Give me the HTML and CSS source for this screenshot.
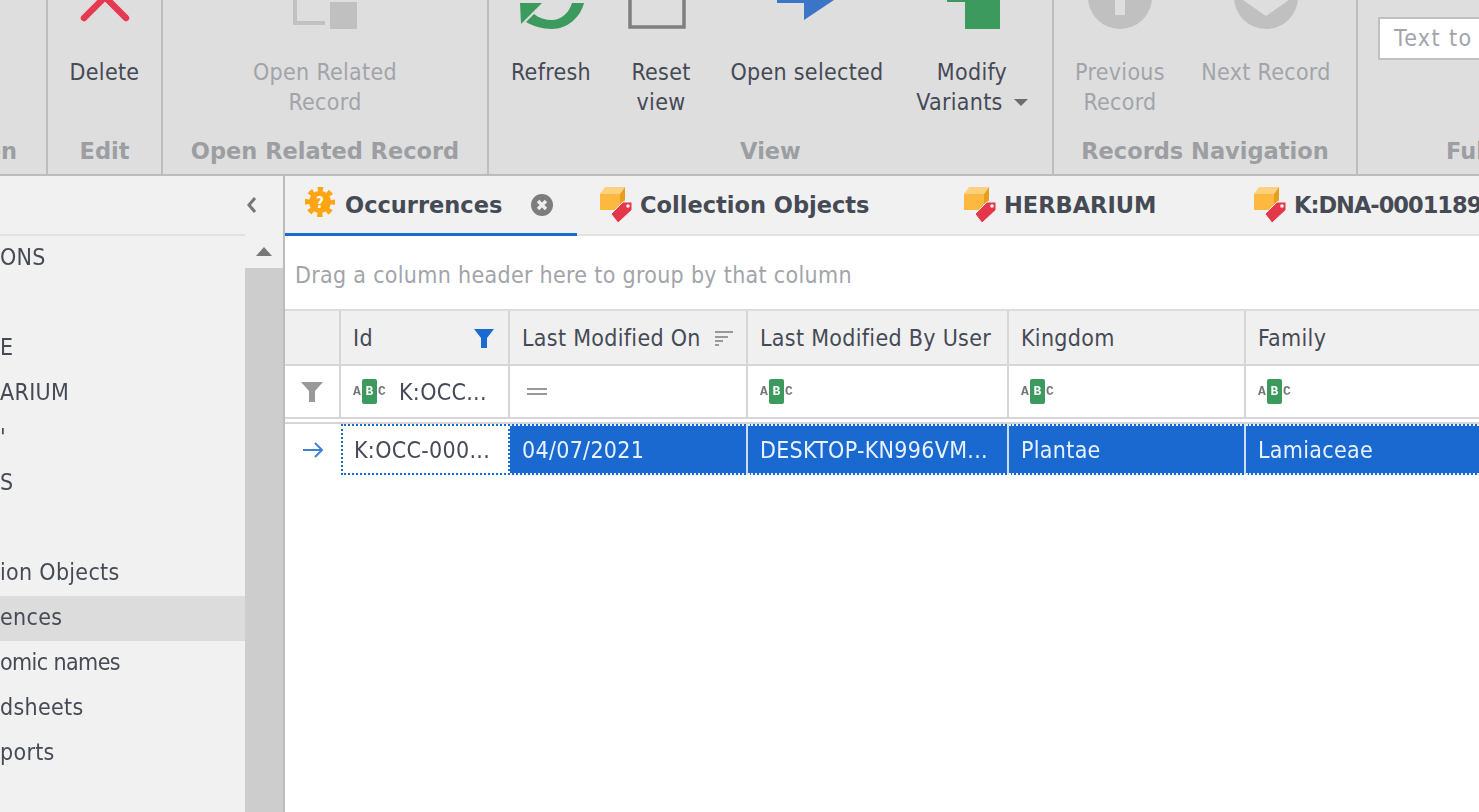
FILE: index.html
```html
<!DOCTYPE html>
<html lang="en">
<head>
<meta charset="utf-8">
<title>Occurrences</title>
<link rel="stylesheet" href="styles.css">
</head>
<body>
<div class="app">
  <header class="ribbon">
    <section class="group g-action"><div class="items"></div><div class="group-label right">on</div></section>
    <section class="group g-edit">
      <div class="items">
        <div class="btn w-full">
          <svg class="ico" width="64" height="29" viewBox="0 0 64 29"><path class="s-red" d="M32-3 11 18M32-3 53 18"/></svg>
          <div class="lbl">Delete</div>
        </div>
      </div>
      <div class="group-label">Edit</div>
    </section>
    <section class="group g-rel">
      <div class="items">
        <div class="btn w-full dis">
          <svg class="ico" width="72" height="29" viewBox="0 0 72 29"><path class="s-gray" d="M6-4V23H36"/><rect class="f-gray" x="41" y="2" width="27" height="27"/></svg>
          <div class="lbl">Open Related<br>Record</div>
        </div>
      </div>
      <div class="group-label">Open Related Record</div>
    </section>
    <section class="group g-view">
      <div class="items">
        <div class="btn w-refresh">
          <svg class="ico" width="68" height="29" viewBox="0 0 68 29"><path class="f-green" d="M67 3C63 18 50 29 35 29C25 29 16 26 9 22L17 14C22 18 28 20 35 20C44 20 52 13 55 3ZM3 3H25L4 24Z"/></svg>
          <div class="lbl">Refresh</div>
        </div>
        <div class="btn w-reset">
          <svg class="ico ico-reset" width="60" height="29" viewBox="0 0 60 29"><path class="s-dark" d="M2-4V27H56V-4"/></svg>
          <div class="lbl">Reset<br>view</div>
        </div>
        <div class="btn w-open">
          <svg class="ico" width="60" height="29" viewBox="0 0 60 29"><path class="f-blue" d="M0 0V3H27V20L57 0Z"/></svg>
          <div class="lbl">Open selected</div>
        </div>
        <div class="btn w-modify">
          <svg class="ico" width="56" height="29" viewBox="0 0 56 29"><path class="f-green" d="M3 0H21V2H3ZM21 0H56V29H21Z"/></svg>
          <div class="lbl">Modify<br>Variants<span class="caret"></span></div>
        </div>
      </div>
      <div class="group-label">View</div>
    </section>
    <section class="group g-nav">
      <div class="items">
        <div class="btn w-prev dis">
          <svg class="ico" width="66" height="29" viewBox="0 0 66 29"><circle class="f-gray" cx="33" cy="-3" r="32"/><rect class="f-ribbon" x="28" y="-3" width="10" height="18"/></svg>
          <div class="lbl">Previous<br>Record</div>
        </div>
        <div class="btn w-next dis">
          <svg class="ico" width="66" height="29" viewBox="0 0 66 29"><circle class="f-gray" cx="33" cy="-3" r="32"/><path class="f-ribbon" d="M10 0H56L33 16Z"/></svg>
          <div class="lbl">Next Record</div>
        </div>
      </div>
      <div class="group-label">Records Navigation</div>
    </section>
    <section class="group g-full">
      <div class="search">Text to search</div>
      <div class="group-label left">Full</div>
    </section>
  </header>

  <main class="body">
    <aside class="side">
      <div class="side-head"><svg width="12" height="18" viewBox="0 0 12 18"><path class="s-chev" d="M9 2 3 9 9 16"/></svg></div>
      <div class="side-main">
        <ul class="nav">
          <li>ONS</li>
          <li></li>
          <li>E</li>
          <li>ARIUM</li>
          <li>'</li>
          <li>S</li>
          <li></li>
          <li>ion Objects</li>
          <li class="on">ences</li>
          <li class="tight">omic names</li>
          <li>dsheets</li>
          <li>ports</li>
          <li></li>
        </ul>
        <div class="scroll">
          <div class="scroll-up"><span class="up"></span></div>
          <div class="scroll-track"></div>
        </div>
      </div>
    </aside>

    <section class="content">
      <nav class="tabs">
        <div class="tab active t-occ">
          <svg width="30" height="36" viewBox="0 0 30 36"><circle class="gear-body" cx="15" cy="15" r="11"/><circle class="gear-teeth" cx="15" cy="15" r="12.6"/><text class="q" x="15" y="20.5">?</text></svg>
          <span class="tab-t">Occurrences</span>
          <svg class="close" width="24" height="24" viewBox="0 0 24 24"><circle class="f-close" cx="12" cy="12" r="11"/><path class="s-x" d="M8 8 16 16M16 8 8 16"/></svg>
        </div>
        <div class="tab t-col"><svg width="34" height="38" viewBox="0 0 34 38"><use href="#cube"/></svg><span class="tab-t">Collection Objects</span></div>
        <div class="tab t-herb"><svg width="34" height="38" viewBox="0 0 34 38"><use href="#cube"/></svg><span class="tab-t">HERBARIUM</span></div>
        <div class="tab t-dna"><svg width="34" height="38" viewBox="0 0 34 38"><use href="#cube"/></svg><span class="tab-t">K:DNA-00011890</span></div>
      </nav>
      <div class="groupby">Drag a column header here to group by that column</div>
      <div class="grid g-head">
        <div class="cell"></div>
        <div class="cell h-id h-fn"><span>Id</span><svg width="20" height="20" viewBox="0 0 20 20"><path class="f-fblue" d="M0 1H20L13 10V20H7V10Z"/></svg></div>
        <div class="cell h-id"><span>Last Modified On</span><svg width="20" height="16" viewBox="0 0 20 16"><path class="s-sort" d="M1 2H19M1 7H14M1 11H9M1 15H5"/></svg></div>
        <div class="cell">Last Modified By User</div>
        <div class="cell">Kingdom</div>
        <div class="cell">Family</div>
      </div>
      <div class="grid g-filter">
        <div class="cell ind"><svg width="22" height="22" viewBox="0 0 22 22"><path class="f-fgray" d="M0 1H22L14 10V21H8V10Z"/></svg></div>
        <div class="cell f-id"><span class="abc"><i>A</i><b>B</b><i>C</i></span><span class="fv">K:OCC...</span></div>
        <div class="cell"><span class="eq"></span></div>
        <div class="cell"><span class="abc"><i>A</i><b>B</b><i>C</i></span></div>
        <div class="cell"><span class="abc"><i>A</i><b>B</b><i>C</i></span></div>
        <div class="cell"><span class="abc"><i>A</i><b>B</b><i>C</i></span></div>
      </div>
      <div class="gap"></div>
      <div class="grid g-row">
        <div class="cell ind"><svg width="22" height="18" viewBox="0 0 22 18"><path class="s-arrow" d="M1 9H20M13 2 20 9 13 16"/></svg></div>
        <div class="cell cur">K:OCC-000...</div>
        <div class="cell sel">04/07/2021</div>
        <div class="cell sel">DESKTOP-KN996VM...</div>
        <div class="cell sel">Plantae</div>
        <div class="cell sel">Lamiaceae</div>
      </div>
    </section>
  </main>
</div>
<svg class="defs" width="0" height="0">
  <defs>
    <g id="cube">
      <path d="M0 8H20V24H0Z" fill="#fdb93f"/>
      <path d="M0 8 5 1H25L20 8Z" fill="#fdd17d"/>
      <path d="M20 8 25 1V14L20 21Z" fill="#e89f1e"/>
      <path d="M11 28 18 37 32 24V16H23Z" fill="#e5374a" stroke="#f1f1f1" stroke-width="1"/>
      <circle cx="28" cy="20" r="1.8" fill="#f3f3f3"/>
    </g>
  </defs>
</svg>
</body>
</html>
```

FILE: styles.css
```css
html, body { margin: 0; height: 100%; overflow: hidden; background: #fff; }
body { font-family: "DejaVu Sans Condensed", "DejaVu Sans", sans-serif; font-stretch: condensed; font-size: 23px; letter-spacing: .3px; color: #454a55; }
.app { width: 1479px; height: 812px; display: flex; flex-direction: column; overflow: hidden; filter: blur(.45px); }
.defs { position: absolute; }

.ribbon { height: 174px; flex: none; display: flex; background: #dedede; border-bottom: 2px solid #bcbcbc; overflow: hidden; }
.group { flex: none; display: flex; flex-direction: column; border-right: 2px solid #bdbdbd; box-sizing: border-box; }
.g-action { width: 48px; }
.g-edit { width: 115px; }
.g-rel { width: 326px; }
.g-view { width: 565px; }
.g-nav { width: 304px; }
.g-full { flex: 1; border-right: 0; position: relative; }
.items { flex: 1; display: flex; }
.btn { flex: none; display: flex; flex-direction: column; align-items: center; }
.w-full { width: 100%; }
.w-refresh { width: 124px; }
.w-reset { width: 96px; }
.w-open { width: 196px; }
.w-modify { width: 134px; }
.w-prev { width: 132px; }
.w-next { width: 160px; }
.ico { display: block; height: 29px; flex: none; }
.ico-reset { margin-right: 7px; }
.lbl { margin-top: 29px; line-height: 29.5px; text-align: center; white-space: nowrap; }
.dis .lbl { color: #a2a4aa; }
.caret { display: inline-block; margin-left: 11px; border: 7px solid transparent; border-top-color: #6c6c6c; border-bottom: 0; vertical-align: 4px; }
.group-label { height: 47px; line-height: 49px; text-align: center; font-weight: 700; font-family: "DejaVu Sans", sans-serif; font-stretch: normal; font-size: 22.5px; letter-spacing: 0; color: #9c9ea2; white-space: nowrap; flex: none; }
.group-label.right { text-align: right; padding-right: 29px; margin-left: -30px; }
.group-label.left { text-align: left; padding-left: 88px; margin-top: auto; }
.search { margin: 17px 0 0 20px; height: 39px; line-height: 39px; border: 2px solid #c0c0c0; border-right: 0; background: #fff; padding-left: 14px; color: #a2a4aa; letter-spacing: 1.4px; white-space: nowrap; overflow: hidden; }

.s-red { fill: none; stroke: #e63950; stroke-width: 6.5; stroke-linecap: round; }
.s-gray { fill: none; stroke: #c2c2c2; stroke-width: 4; }
.f-gray { fill: #c0c0c0; }
.f-ribbon { fill: #dedede; }
.f-green { fill: #3c9a5f; }
.s-dark { fill: none; stroke: #7f7f7f; stroke-width: 3.5; }
.f-blue { fill: #3a75c8; }
.gear-body { fill: #ffa412; }
.gear-teeth { fill: none; stroke: #ffa412; stroke-width: 5; stroke-dasharray: 5.2 4.7; stroke-dashoffset: 2.6; }
.q { fill: #fff; font-size: 15px; font-weight: 700; text-anchor: middle; }
.f-close { fill: #7d7d7d; }
.s-x { stroke: #eee; stroke-width: 3.4; fill: none; }
.s-chev { fill: none; stroke: #777; stroke-width: 3; }
.f-fblue { fill: #1a6bd0; }
.s-sort { fill: none; stroke: #999; stroke-width: 1.8; }
.f-fgray { fill: #999; }
.s-arrow { fill: none; stroke: #3f80d8; stroke-width: 2; }

.body { flex: 1; display: flex; min-height: 0; }
.side { width: 285px; flex: none; box-sizing: border-box; background: #f1f1f1; border-right: 2px solid #bcbcbc; display: flex; flex-direction: column; }
.side-head { height: 58px; flex: none; display: flex; align-items: center; justify-content: flex-end; padding-right: 25px; }
.side-main { flex: 1; display: flex; min-height: 0; }
.nav { list-style: none; margin: 0; padding: 0; width: 245px; flex: none; border-top: 2px solid #e2e2e2; box-sizing: border-box; overflow: hidden; }
.nav li { height: 45px; line-height: 43px; white-space: nowrap; }
.nav .on { background: #dcdcdc; }
.nav .tight { letter-spacing: -.6px; }
.scroll { flex: 1; display: flex; flex-direction: column; }
.scroll-up { height: 34px; flex: none; display: flex; align-items: center; justify-content: center; }
.up { border: 8px solid transparent; border-bottom: 9px solid #777; border-top: 0; }
.scroll-track { flex: 1; background: #cdcdcd; }

.content { flex: 1; min-width: 0; display: flex; flex-direction: column; overflow: hidden; }
.tabs { height: 60px; flex: none; display: flex; background: #f1f1f1; box-shadow: inset 0 -2px 0 #e2e2e2; overflow: hidden; }
.tab { flex: none; display: flex; align-items: center; box-sizing: border-box; height: 60px; border-bottom: 3px solid transparent; }
.tab-t { font-weight: 700; font-family: "DejaVu Sans", sans-serif; font-stretch: normal; font-size: 22.5px; letter-spacing: 0; color: #454a55; white-space: nowrap; }
.tab.active { border-bottom-color: #1a6bd0; }
.t-occ { width: 292px; padding-left: 20px; gap: 10px; }
.close { margin-left: 18px; }
.t-col { width: 365px; padding-left: 23px; gap: 6px; }
.t-herb { width: 312px; padding-left: 22px; gap: 6px; }
.t-dna { gap: 6px; }
.t-dna .tab-t { letter-spacing: -1px; }
.groupby { height: 75px; line-height: 78px; flex: none; padding-left: 10px; color: #a2a4aa; background: #fff; border-bottom: 2px solid #dcdcdc; box-sizing: border-box; }

.grid { display: grid; grid-template-columns: 56px 169px 238px 261px 237px 300px; box-sizing: border-box; flex: none; }
.cell { display: flex; align-items: center; padding: 0 12px; white-space: nowrap; overflow: hidden; border-right: 2px solid #d6d6d6; box-sizing: border-box; min-width: 0; }
.g-head { height: 55px; background: #f0f0f0; border-bottom: 2px solid #d6d6d6; }
.h-id { justify-content: space-between; }
.h-fn { padding-right: 14px; }
.g-filter { height: 51px; }
.ind { justify-content: center; padding: 0; }
.f-id { gap: 12px; padding-right: 6px; }
.abc { display: inline-flex; align-items: center; margin-left: -1px; font-family: "Liberation Mono", monospace; font-size: 13px; font-weight: 700; letter-spacing: 0; color: #777; }
.abc i { font-style: normal; width: 10px; text-align: center; }
.abc b { display: block; width: 15px; height: 25px; line-height: 25px; text-align: center; background: #3c9a5f; color: #fff; border-radius: 2px; }
.eq { display: block; width: 20px; height: 3px; border-top: 2px solid #999; border-bottom: 2px solid #999; margin-left: 5px; }
.gap { height: 7px; flex: none; background: #fff; border-top: 2px solid #d6d6d6; border-bottom: 2px solid #d6d6d6; box-sizing: border-box; }
.g-row { height: 51px; }
.g-row .cell { border-bottom: 2px solid #d6d6d6; }
.g-row .ind { border-right: 0; border-bottom: 0; }
.cur { border: 2px dotted #1a6bd0 !important; padding-left: 11px; }
.sel { background: #1a69d0; color: #e9f2fc; border-right-color: #cfdcee; border-top: 2px dotted #e9f2fc; border-bottom: 2px dotted #e9f2fc !important; }
```
